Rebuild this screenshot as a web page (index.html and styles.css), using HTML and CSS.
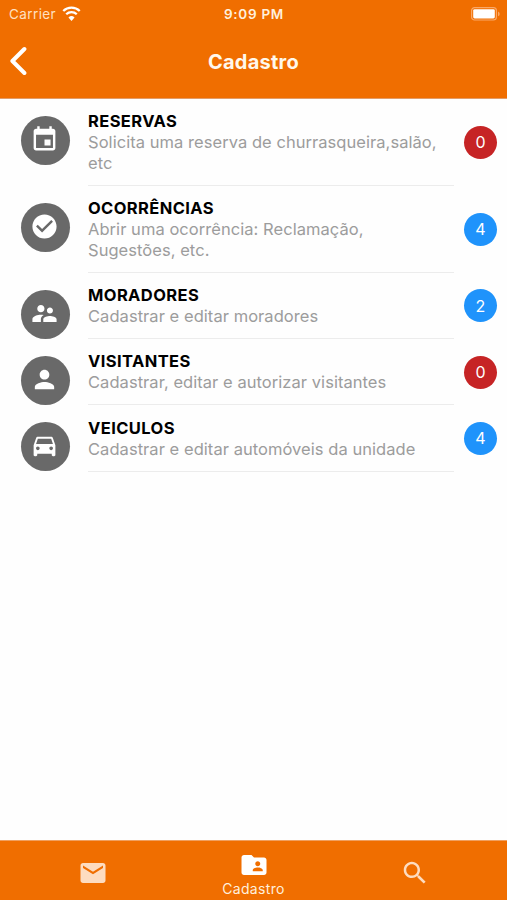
FILE: index.html
```html
<!DOCTYPE html>
<html lang="pt-BR">
<head>
    <meta charset="UTF-8">
    <meta name="viewport" content="width=device-width, initial-scale=1.0">
    <title>Cadastro</title>
    <link rel="stylesheet" href="styles.css">
</head>
<body>
    <header class="header">
        <div class="status-bar">
            <div class="carrier">
                <span>Carrier</span>
                <svg class="wifi" viewBox="0 0 18 14">
                    <path d="M1.2 4.6a11.2 11.2 0 0 1 15.6 0" />
                    <path d="M4 7.7a7.2 7.2 0 0 1 10 0" />
                    <path class="dot" d="M9 14l-2.9-3.2a4.2 4.2 0 0 1 5.8 0z" />
                </svg>
            </div>
            <div class="time">9:09 PM</div>
            <div class="battery-wrap">
                <svg class="battery" viewBox="0 0 30 14">
                    <rect class="battery-case" x="0.6" y="0.6" width="24.8" height="12.4" rx="3" />
                    <rect class="battery-level" x="2.2" y="2.2" width="21.6" height="9.2" rx="1.4" />
                    <path class="battery-tip" d="M27 4.6v4.6q1.7-.6 1.7-2.3T27 4.6z" />
                </svg>
            </div>
        </div>
        <div class="nav-bar">
            <svg class="back" viewBox="0 0 18 30">
                <path d="M15.4 3L3.4 15l12 12" />
            </svg>
            <h1>Cadastro</h1>
        </div>
    </header>

    <main class="list">
        <div class="item">
            <div class="avatar">
                <svg viewBox="0 0 24 24"><path d="M17 12h-5v5h5v-5zM16 1v2H8V1H6v2H5c-1.11 0-1.99.9-1.99 2L3 19c0 1.1.89 2 2 2h14c1.1 0 2-.9 2-2V5c0-1.1-.9-2-2-2h-1V1h-2zm3 18H5V8h14v11z"/></svg>
            </div>
            <div class="item-text">
                <h2>RESERVAS</h2>
                <p>Solicita uma reserva de churrasqueira,salão, etc</p>
            </div>
            <span class="badge red">0</span>
        </div>
        <div class="item">
            <div class="avatar">
                <svg viewBox="0 0 24 24"><path d="M12 2C6.48 2 2 6.48 2 12s4.48 10 10 10 10-4.48 10-10S17.52 2 12 2zm-2 15l-5-5 1.41-1.41L10 14.17l7.59-7.59L19 8l-9 9z"/></svg>
            </div>
            <div class="item-text">
                <h2>OCORRÊNCIAS</h2>
                <p>Abrir uma ocorrência: Reclamação, Sugestões, etc.</p>
            </div>
            <span class="badge blue">4</span>
        </div>
        <div class="item">
            <div class="avatar">
                <svg viewBox="0 0 24 24"><path d="M16.5 12c1.38 0 2.49-1.12 2.49-2.5S17.88 7 16.5 7C15.12 7 14 8.12 14 9.5s1.12 2.5 2.5 2.5zM9 11c1.66 0 2.99-1.34 2.99-3S10.66 5 9 5C7.34 5 6 6.34 6 8s1.34 3 3 3zm7.5 3c-1.83 0-5.5.92-5.5 2.75V19h11v-2.25c0-1.83-3.67-2.75-5.5-2.75zM9 13c-2.33 0-7 1.17-7 3.5V19h7v-2.25c0-.85.33-2.34 2.37-3.47C10.5 13.1 9.66 13 9 13z"/></svg>
            </div>
            <div class="item-text">
                <h2>MORADORES</h2>
                <p>Cadastrar e editar moradores</p>
            </div>
            <span class="badge blue">2</span>
        </div>
        <div class="item">
            <div class="avatar">
                <svg viewBox="0 0 24 24"><path d="M12 12c2.21 0 4-1.79 4-4s-1.79-4-4-4-4 1.79-4 4 1.79 4 4 4zm0 2c-2.67 0-8 1.34-8 4v2h16v-2c0-2.66-5.33-4-8-4z"/></svg>
            </div>
            <div class="item-text">
                <h2>VISITANTES</h2>
                <p>Cadastrar, editar e autorizar visitantes</p>
            </div>
            <span class="badge red">0</span>
        </div>
        <div class="item">
            <div class="avatar">
                <svg viewBox="0 0 24 24"><path d="M18.92 5.01C18.72 4.42 18.16 4 17.5 4h-11c-.66 0-1.21.42-1.42 1.01L3 11v8c0 .55.45 1 1 1h1c.55 0 1-.45 1-1v-1h12v1c0 .55.45 1 1 1h1c.55 0 1-.45 1-1v-8l-2.08-5.99zM6.5 15c-.83 0-1.5-.67-1.5-1.5S5.67 12 6.5 12s1.5.67 1.5 1.5S7.33 15 6.5 15zm11 0c-.83 0-1.5-.67-1.5-1.5s.67-1.5 1.5-1.5 1.5.67 1.5 1.5-.67 1.5-1.5 1.5zM5 10l1.5-4.5h11L19 10H5z"/></svg>
            </div>
            <div class="item-text">
                <h2>VEICULOS</h2>
                <p>Cadastrar e editar automóveis da unidade</p>
            </div>
            <span class="badge blue">4</span>
        </div>
    </main>

    <nav class="tabs">
        <div class="tab">
            <svg viewBox="0 0 24 24"><path d="M20 4H4c-1.1 0-1.99.9-1.99 2L2 18c0 1.1.9 2 2 2h16c1.1 0 2-.9 2-2V6c0-1.1-.9-2-2-2zm0 4l-8 5-8-5V6l8 5 8-5v2z"/></svg>
        </div>
        <div class="tab active">
            <svg viewBox="0 0 24 24"><path d="M20 6h-8l-2-2H4c-1.1 0-1.99.9-1.99 2L2 18c0 1.1.9 2 2 2h16c1.1 0 2-.9 2-2V8c0-1.1-.9-2-2-2zm-5 3c1.1 0 2 .9 2 2s-.9 2-2 2-2-.9-2-2 .9-2 2-2zm4 8h-8v-1c0-1.33 2.67-2 4-2s4 .67 4 2v1z"/></svg>
            <span>Cadastro</span>
        </div>
        <div class="tab">
            <svg viewBox="0 0 24 24"><path d="M15.5 14h-.79l-.28-.27C15.41 12.59 16 11.11 16 9.5 16 5.91 13.09 3 9.5 3S3 5.91 3 9.5 5.91 16 9.5 16c1.61 0 3.09-.59 4.23-1.57l.27.28v.79l5 4.99L20.49 19l-4.99-5zm-6 0C7.01 14 5 11.99 5 9.5S7.01 5 9.5 5 14 7.01 14 9.5 11.99 14 9.5 14z"/></svg>
        </div>
    </nav>
</body>
</html>
```
FILE: styles.css
```css
* {
    box-sizing: border-box;
}
body {
    margin: 0;
    height: 100vh;
    display: flex;
    flex-direction: column;
    background-color: #fefefe;
    font-family: Inter, "Liberation Sans", sans-serif;
    overflow: hidden;
}
h1, h2, p {
    margin: 0;
}
.header {
    height: 98.6px;
    flex: none;
    background-color: #f06e00;
    border-bottom: 1px solid #e29c68;
    color: #fff8ec;
}
.status-bar {
    height: 27px;
    display: grid;
    grid-template-columns: 1fr auto 1fr;
    align-items: center;
    padding: 0 6px 0 9px;
    font-size: 13.5px;
}
.carrier {
    display: flex;
    align-items: center;
    gap: 6px;
    color: #ffe0c0;
    letter-spacing: 0.4px;
}
.wifi {
    width: 19px;
    height: 15px;
    fill: none;
    stroke: #fff;
    stroke-width: 2.2;
}
.wifi .dot {
    fill: #fff;
    stroke: none;
}
.time {
    font-weight: 600;
    letter-spacing: 0.7px;
    margin-right: 2px;
    color: #fff0dc;
}
.battery-wrap {
    display: flex;
    justify-content: flex-end;
}
.battery {
    width: 30px;
    height: 14px;
}
.battery-case {
    fill: none;
    stroke: #f9a868;
    stroke-width: 1.2;
}
.battery-level {
    fill: #fff;
}
.battery-tip {
    fill: #f9a868;
}
.nav-bar {
    height: 68px;
    display: grid;
    grid-template-columns: 28px 1fr 28px;
    align-items: center;
    padding: 0 9px;
}
.back {
    width: 18px;
    height: 30px;
    fill: none;
    stroke: #fff;
    stroke-width: 4;
    stroke-linecap: round;
    stroke-linejoin: round;
}
.nav-bar h1 {
    text-align: center;
    font-size: 20px;
    font-weight: 700;
    letter-spacing: 0.25px;
    padding-top: 1px;
}
.list {
    flex: 1;
}
.item {
    display: flex;
    padding: 0 10px 0 20.5px;
}
.avatar {
    width: 49px;
    height: 49px;
    margin: 17px 18.5px -4px 0;
    border-radius: 50%;
    background-color: #696969;
    display: flex;
    align-items: center;
    justify-content: center;
    flex: none;
    padding: 0 1.6px 1.6px 0;
}
.avatar svg {
    width: 29px;
    height: 29px;
    fill: #fff;
}
.item-text {
    flex: 1;
    padding: 12.4px 0 11.3px;
    border-bottom: 1px solid #ececec;
    line-height: 20.8px;
}
.item-text h2 {
    font-size: 16.5px;
    font-weight: 700;
    line-height: 20.8px;
    letter-spacing: 0.4px;
    color: #000;
}
.item-text p {
    font-size: 16.5px;
    color: #9c9c9c;
    letter-spacing: 0.05px;
}
.badge {
    width: 33px;
    height: 33px;
    margin-left: 10px;
    align-self: center;
    border-radius: 50%;
    display: flex;
    align-items: center;
    justify-content: center;
    flex: none;
    color: #fff;
    font-size: 16px;
}
.red {
    background-color: #c62425;
}
.blue {
    background-color: #1f93fb;
}
.tabs {
    height: 60px;
    flex: none;
    display: grid;
    grid-template-columns: 1fr 137px 1fr;
    background-color: #f06e00;
    border-top: 1px solid #f0a060;
}
.tab {
    display: flex;
    flex-direction: column;
    align-items: center;
    justify-content: center;
    padding-top: 5px;
    color: #ffefdc;
    font-size: 14px;
    letter-spacing: 0.35px;
}
.tab svg {
    width: 30px;
    height: 30px;
    fill: #fddcc0;
}
.tab.active {
    justify-content: flex-start;
    padding-top: 8.5px;
}
.tab.active svg {
    fill: #fff;
}
```
